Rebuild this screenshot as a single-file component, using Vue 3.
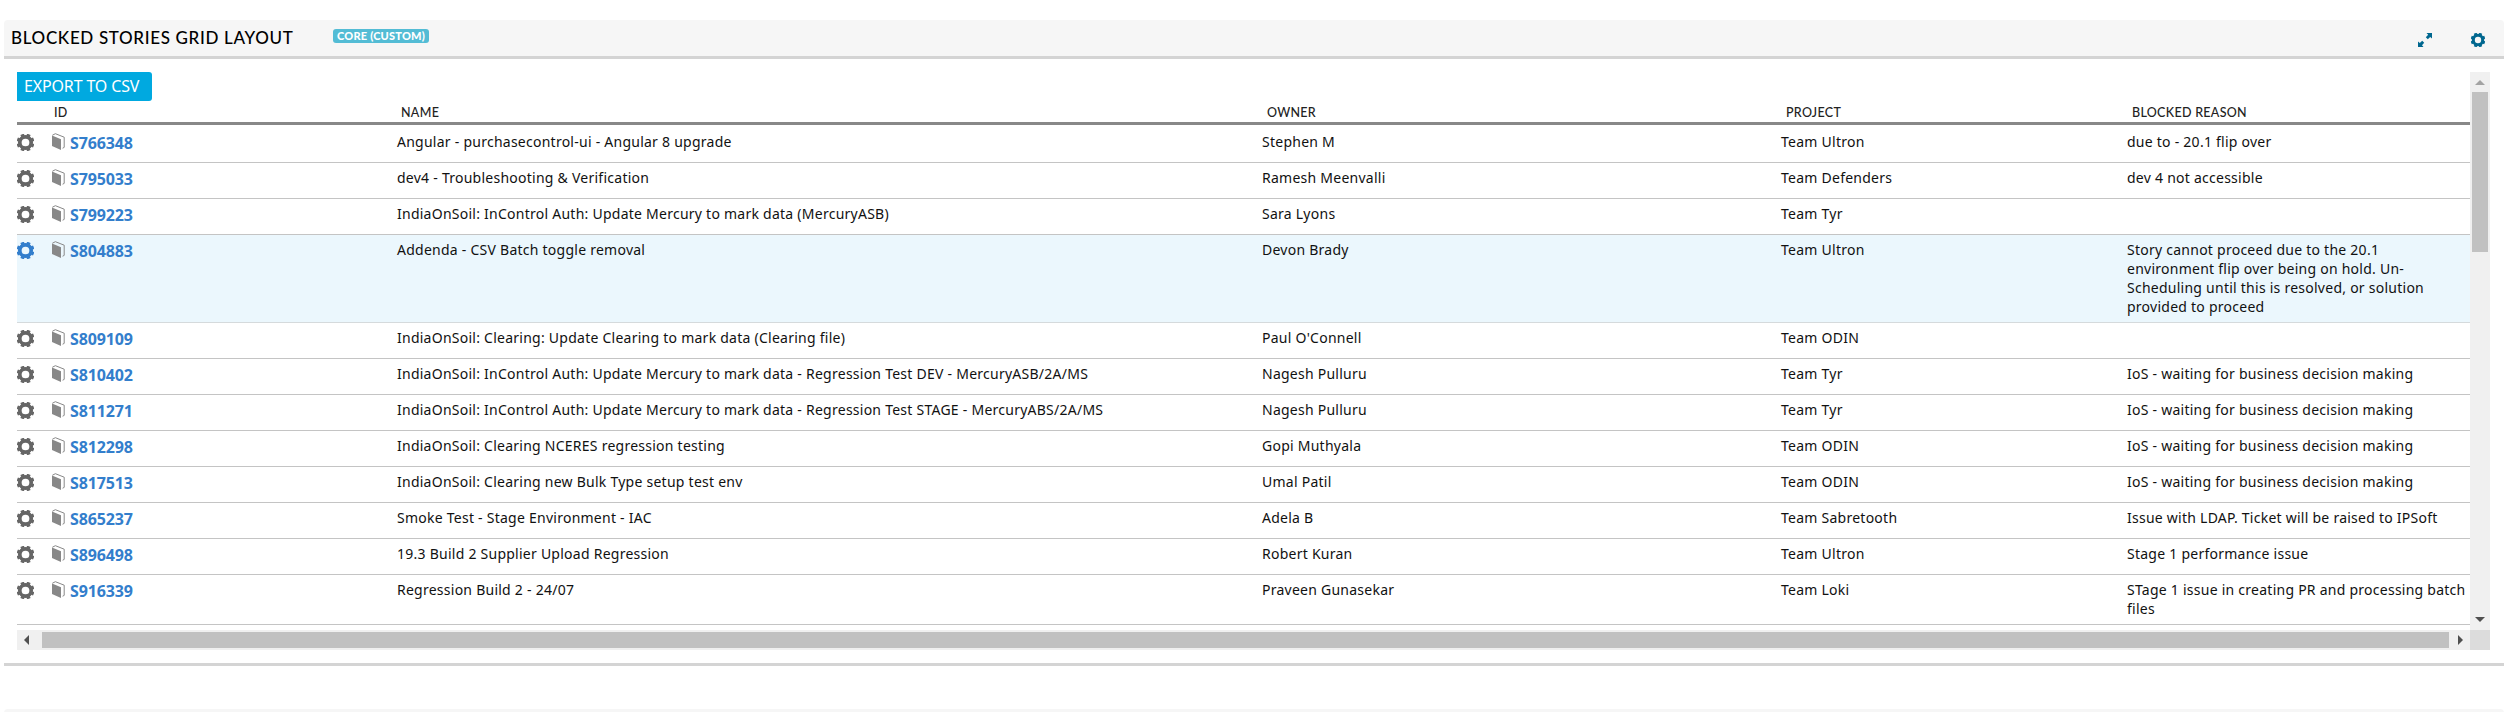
<script setup>
const columns = ['', 'ID', 'NAME', 'OWNER', 'PROJECT', 'BLOCKED REASON']
const waiting = 'IoS - waiting for business decision making'
const rows = [
  { id: 'S766348', name: 'Angular - purchasecontrol-ui - Angular 8 upgrade', owner: 'Stephen M', project: 'Team Ultron', reason: 'due to - 20.1 flip over' },
  { id: 'S795033', name: 'dev4 - Troubleshooting & Verification', owner: 'Ramesh Meenvalli', project: 'Team Defenders', reason: 'dev 4 not accessible' },
  { id: 'S799223', name: 'IndiaOnSoil: InControl Auth: Update Mercury to mark data (MercuryASB)', owner: 'Sara Lyons', project: 'Team Tyr', reason: '' },
  { id: 'S804883', name: 'Addenda - CSV Batch toggle removal', owner: 'Devon Brady', project: 'Team Ultron', reason: 'Story cannot proceed due to the 20.1\nenvironment flip over being on hold. Un-\nScheduling until this is resolved, or solution\nprovided to proceed', active: true },
  { id: 'S809109', name: 'IndiaOnSoil: Clearing: Update Clearing to mark data (Clearing file)', owner: "Paul O'Connell", project: 'Team ODIN', reason: '' },
  { id: 'S810402', name: 'IndiaOnSoil: InControl Auth: Update Mercury to mark data - Regression Test DEV - MercuryASB/2A/MS', owner: 'Nagesh Pulluru', project: 'Team Tyr', reason: waiting },
  { id: 'S811271', name: 'IndiaOnSoil: InControl Auth: Update Mercury to mark data - Regression Test STAGE - MercuryABS/2A/MS', owner: 'Nagesh Pulluru', project: 'Team Tyr', reason: waiting },
  { id: 'S812298', name: 'IndiaOnSoil: Clearing NCERES regression testing', owner: 'Gopi Muthyala', project: 'Team ODIN', reason: waiting },
  { id: 'S817513', name: 'IndiaOnSoil: Clearing new Bulk Type setup test env', owner: 'Umal Patil', project: 'Team ODIN', reason: waiting },
  { id: 'S865237', name: 'Smoke Test - Stage Environment - IAC', owner: 'Adela B', project: 'Team Sabretooth', reason: 'Issue with LDAP. Ticket will be raised to IPSoft' },
  { id: 'S896498', name: '19.3 Build 2 Supplier Upload Regression', owner: 'Robert Kuran', project: 'Team Ultron', reason: 'Stage 1 performance issue' },
  { id: 'S916339', name: 'Regression Build 2 - 24/07', owner: 'Praveen Gunasekar', project: 'Team Loki', reason: 'STage 1 issue in creating PR and processing batch\nfiles' },
]
const teeth = [22.5, 67.5, 112.5, 157.5, 202.5, 247.5, 292.5, 337.5]
</script>

<template>
  <div class="page">
    <section class="panel">
      <header class="panel-head">
        <h1 class="title">BLOCKED STORIES GRID LAYOUT</h1>
        <span class="badge">CORE (CUSTOM)</span>
        <svg class="expand" viewBox="0 0 14 14">
          <path d="M8.5 0H14V5.5L12.2 4L9.8 6.2L7.8 4.2L10.2 1.8ZM0 8.5L1.8 10L4.2 7.8L6.2 9.8L4 12.2L5.5 14H0Z" />
        </svg>
        <svg class="gear head-gear" viewBox="-8.8 -8.8 17.6 17.6">
          <circle r="5.9" />
          <rect v-for="a in teeth" :key="a" x="-1.9" y="-9.2" width="3.8" height="4" :transform="`rotate(${a})`" />
        </svg>
      </header>
      <div class="body">
        <div class="scroller">
          <div class="viewport">
            <button class="export">EXPORT TO CSV</button>
            <div class="grid head">
              <span v-for="c in columns" :key="c">{{ c }}</span>
            </div>
            <div v-for="r in rows" :key="r.id" class="grid row" :class="{ active: r.active }">
              <svg class="gear" viewBox="-8.8 -8.8 17.6 17.6">
                <circle r="5.9" />
                <rect v-for="a in teeth" :key="a" x="-1.9" y="-9.2" width="3.8" height="4" :transform="`rotate(${a})`" />
              </svg>
              <div class="id">
                <svg class="book" viewBox="0 0 13 18">
                  <path class="cover" d="M0 2.4L9 6.2V17L0 13Z" />
                  <path class="edge" d="M.4 2.2L3.4 .7L12.2 4.2V14.4L10.6 15.2" />
                </svg>
                <a>{{ r.id }}</a>
              </div>
              <span>{{ r.name }}</span>
              <span>{{ r.owner }}</span>
              <span>{{ r.project }}</span>
              <span>{{ r.reason }}</span>
            </div>
          </div>
          <div class="vbar">
            <svg class="arrow" viewBox="0 0 20 20"><path class="off" d="M5 13L10 8L15 13Z" /></svg>
            <div class="vthumb"></div>
            <svg class="arrow" viewBox="0 0 20 20"><path d="M5 7L10 12L15 7Z" /></svg>
          </div>
          <div class="hbar">
            <svg class="harrow" viewBox="0 0 25 20"><path d="M12 5L7 10L12 15Z" /></svg>
            <div class="hthumb"></div>
            <svg class="harrow end" viewBox="0 0 21 20"><path d="M9 5L14 10L9 15Z" /></svg>
          </div>
          <div class="corner"></div>
        </div>
      </div>
    </section>
    <div class="next-panel"></div>
  </div>
</template>

<style>
body { margin: 0; background: #fff; }
</style>

<style scoped>
.page {
  box-sizing: border-box;
  width: 2515px;
  height: 712px;
  padding: 20px 11px 0 4px;
  overflow: hidden;
  background: #fff;
  font-family: "Noto Sans", "Open Sans", sans-serif;
}
.panel { height: 643px; border-bottom: 3px solid #d4d4d4; border-radius: 4px 4px 0 0; }
.panel-head {
  display: flex;
  align-items: center;
  height: 36px;
  background: #f6f6f6;
  border-bottom: 3px solid #d4d4d4;
  border-radius: 4px 4px 0 0;
}
.title {
  width: 322px;
  margin: 0 0 0 7px;
  font: 500 17px/36px Lato, sans-serif;
  letter-spacing: .66px;
  color: #000;
  white-space: nowrap;
}
.badge {
  box-sizing: border-box;
  width: 96px;
  height: 14px;
  margin-top: -5px;
  border-radius: 3px;
  background: #53bcd5;
  color: #fff;
  font: 900 11px/14px Lato, sans-serif;
  letter-spacing: .2px;
  text-align: center;
  white-space: nowrap;
}
.expand { width: 14px; height: 14px; margin: 3px 39px 0 auto; fill: #00678f; }
.gear { width: 17px; height: 17px; fill: #666; stroke: none; }
.gear circle { fill: none; stroke: #666; stroke-width: 3.8; }
.head-gear { width: 14px; height: 14px; margin: 3px 19px 0 0; fill: #00678f; }
.head-gear circle { stroke: #00678f; }
.body { padding: 13px 14px 0 13px; }
.scroller {
  display: grid;
  grid-template-columns: 2453px 20px;
  grid-template-rows: 558px 20px;
}
.viewport { overflow: hidden; }
.export {
  display: block;
  width: 135px;
  height: 29px;
  padding: 0 0 0 7px;
  border: 0;
  border-radius: 0 3px 3px 0;
  background: #00a9e0;
  color: #fff;
  font: 400 16px/29px "Noto Sans", sans-serif;
  letter-spacing: -.15px;
  text-align: left;
  white-space: nowrap;
}
.grid { display: grid; grid-template-columns: 33px 347px 865px 519px 346px 343px; }
.head {
  height: 21px;
  border-bottom: 3px solid #888;
  font: 500 12.5px/23px Lato, sans-serif;
  letter-spacing: .3px;
  color: #222;
  margin-bottom: 2px;
}
.head span { padding-left: 5px; }
.head span:nth-child(2), .head span:nth-child(3) { padding-left: 4px; }
.row {
  box-sizing: border-box;
  min-height: 36px;
  padding: 5px 0 6px;
  border-bottom: 1px solid #c4c4c4;
  align-items: start;
  font-size: 14px;
  line-height: 19px;
  letter-spacing: .25px;
  color: #111;
}
.row span { white-space: pre; }
.row.active { background: #ebf7fd; border-color: #d5dadc; }
.row.active .gear { fill: #337ecc; }
.row.active .gear circle { stroke: #337ecc; }
.row .gear { margin-top: 2px; }
.id { display: flex; gap: 5px; align-items: flex-start; padding-left: 2px; height: 19px; letter-spacing: -.15px; }
.id a { color: #337ecc; font-weight: 700; font-size: 16px; line-height: 22px; }
.book { width: 13px; height: 18px; margin-top: 1px; }
.cover { fill: #888; }
.edge { fill: none; stroke: #888; stroke-width: 1; }
.vbar, .hbar { display: flex; background: #f0f0f0; }
.vbar { flex-direction: column; }
.arrow { width: 20px; height: 20px; fill: #505050; }
.arrow .off { fill: #a3a3a3; }
.vthumb { width: 16px; height: 160px; margin: 0 2px auto; background: #c1c1c1; }
.harrow { width: 25px; height: 20px; fill: #505050; }
.harrow.end { width: 21px; }
.hthumb { flex: 1; height: 16px; margin-top: 2px; background: #c1c1c1; }
.corner { background: #dcdcdc; }
.next-panel { height: 20px; margin-top: 43px; background: #f6f6f6; border-radius: 4px 4px 0 0; }
</style>
